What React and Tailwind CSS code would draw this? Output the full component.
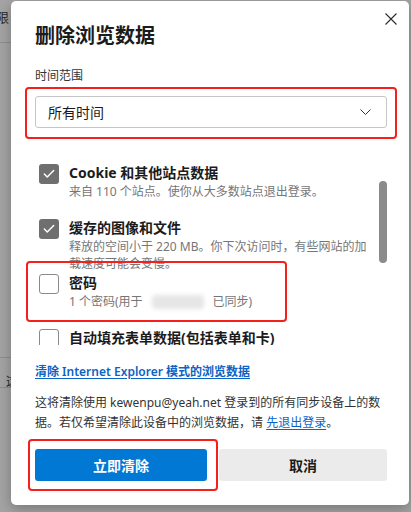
import { Check } from 'lucide-react';

const font = "font-['Noto_Sans','Noto_Sans_CJK_SC',sans-serif]";

// One row of the scrolling list
function DataRow({ checked, title, children }) {
  return (
    <div className="h-[55px] flex items-start shrink-0">
      <div
        className={`ml-1 mt-px w-5 h-5 shrink-0 rounded-[3px] flex items-center justify-center ${
          checked ? 'bg-[#6f6f6f]' : 'bg-white border border-[#8a8a8a]'
        }`}
      >
        {checked && <Check className="w-[14px] h-[14px] text-white" strokeWidth={2.5} />}
      </div>
      <div className="ml-[10px] flex flex-col">
        <div className="h-5 leading-5 text-[14px] font-bold text-[#1b1b1b]">{title}</div>
        <div className="leading-[17px] text-[12px] text-[#767676] w-[300px]">{children}</div>
      </div>
    </div>
  );
}

export default function App() {
  return (
    <div className={`w-[411px] h-[512px] bg-[#a4a4a4] flex overflow-hidden ${font}`}>
      {/* Dimmed page behind the dialog */}
      <div className="w-[11px] shrink-0 flex flex-col overflow-hidden">
        <div className="h-[42px] pt-[9px] -ml-[4px] text-[13px] leading-4 text-[#2a2a2a]">限</div>
        <div className="h-px bg-[#8e8e8e]" />
        <div className="h-[314px]" />
        <div className="h-px bg-[#8e8e8e]" />
        <div className="h-[29px] pt-[18px] ml-[6px] text-[12px] leading-3 text-[#2a2a2a]">这</div>
        <div className="h-px bg-[#8e8e8e]" />
      </div>

      {/* Dialog */}
      <div className="relative mt-px w-[398px] h-[504px] shrink-0 bg-white rounded-[5px] shadow-[0_4px_14px_rgba(0,0,0,0.28)] flex flex-col pl-6 pr-[22px]">
        <svg className="absolute left-[374px] top-[12px] w-3 h-3" viewBox="0 0 12 12">
          <path d="M0.5 0.5 L11.5 11.5 M11.5 0.5 L0.5 11.5" stroke="#2b2b2b" strokeWidth="1.1" fill="none" />
        </svg>

        <div className="pt-[21px] h-[49px] leading-7 text-[20px] font-bold text-[#1b1b1b]">删除浏览数据</div>

        <div className="mt-4 h-5 leading-5 text-[12px] text-[#333]">时间范围</div>

        <div className="mt-[10px] h-8 shrink-0 border border-[#c6c6c6] rounded-[3px] flex items-center justify-between pl-3 pr-[15px]">
          <span className="text-[14px] text-[#1b1b1b]">所有时间</span>
          <svg className="w-[11px] h-[6px]" viewBox="0 0 11 6">
            <path d="M0.5 0.5 L5.5 5.5 L10.5 0.5" stroke="#333" strokeWidth="1" fill="none" />
          </svg>
        </div>

        {/* Scrolling list of data kinds */}
        <div className="relative mt-[10px] h-[207px] pt-[25px] shrink-0 overflow-hidden flex flex-col">
          <DataRow checked title="Cookie 和其他站点数据">
            来自 110 个站点。使你从大多数站点退出登录。
          </DataRow>
          <DataRow checked title="缓存的图像和文件">
            释放的空间小于 220 MB。你下次访问时，有些网站的加载速度可能会变慢。
          </DataRow>
          <DataRow title="密码">
            <span className="flex items-center">
              1 个密码(用于
              <span className="ml-[9px] mr-[9px] w-[52px] h-[14px] bg-[#e6e6e6] blur-[2px] rounded" />
              已同步)
            </span>
          </DataRow>
          <DataRow title="自动填充表单数据(包括表单和卡)" />
          <div className="absolute left-[344px] top-[43px] w-2 h-[82px] rounded-full bg-[#8b8b8b]" />
        </div>

        <a className="mt-[17px] h-5 leading-5 text-[12px] font-semibold text-[#0b63c4] underline underline-offset-2 self-start">
          清除 Internet Explorer 模式的浏览数据
        </a>

        <p className="mt-[11px] w-[352px] leading-5 text-[12px] text-[#333]">
          这将清除使用 kewenpu@yeah.net 登录到的所有同步设备上的数据。若仅希望清除此设备中的浏览数据，请{' '}
          <span className="text-[#0b63c4] underline underline-offset-2">先退出登录</span>。
        </p>

        <div className="mt-4 flex gap-3">
          <button className="w-[172px] h-8 rounded-[3px] bg-[#0078d4] text-white text-[14px] font-bold">立即清除</button>
          <button className="flex-1 h-8 rounded-[3px] bg-[#ebebeb] text-[#1b1b1b] text-[14px] font-bold">取消</button>
        </div>

        {/* Red annotation boxes */}
        <div className="absolute left-[14px] top-[86px] w-[372px] h-[52px] border-2 border-[#f5201c] rounded-[4px]" />
        <div className="absolute left-[15px] top-[260px] w-[261px] h-[61px] border-2 border-[#f5201c] rounded-[4px]" />
        <div className="absolute left-[17px] top-[438px] w-[190px] h-[52px] border-2 border-[#f5201c] rounded-[4px]" />
      </div>
    </div>
  );
}
